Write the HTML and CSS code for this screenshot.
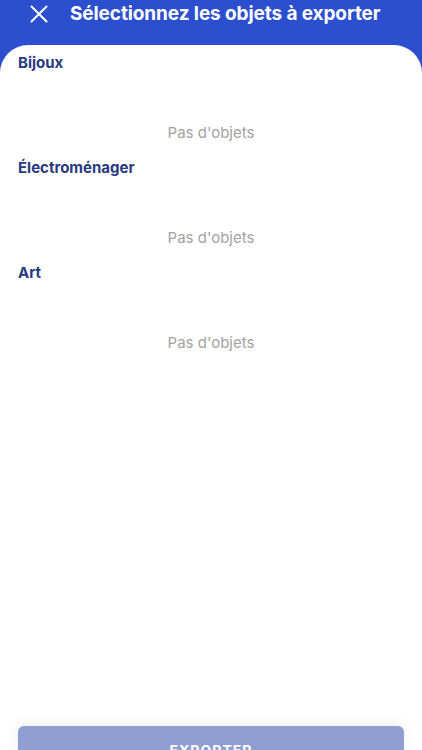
FILE: index.html
```html
<!DOCTYPE html>
<html lang="fr">
<head>
    <meta charset="UTF-8">
    <meta name="viewport" content="width=device-width, initial-scale=1.0">
    <title>Exporter</title>
    <link rel="stylesheet" href="styles.css">
</head>
<body>
    <div class="app">
        <div class="header">
            <button class="close-btn" aria-label="Fermer">
                <svg width="18" height="18" viewBox="0 0 18 18">
                    <path d="M1.5 1.5 L16.5 16.5 M16.5 1.5 L1.5 16.5" stroke="#fff" stroke-width="2" stroke-linecap="round" fill="none"/>
                </svg>
            </button>
            <h1 class="title">Sélectionnez les objets à exporter</h1>
        </div>
        <div class="sheet">
            <div class="list">
                <div class="section">
                    <h2 class="section-title">Bijoux</h2>
                    <p class="empty">Pas d'objets</p>
                </div>
                <div class="section">
                    <h2 class="section-title">Électroménager</h2>
                    <p class="empty">Pas d'objets</p>
                </div>
                <div class="section">
                    <h2 class="section-title">Art</h2>
                    <p class="empty">Pas d'objets</p>
                </div>
            </div>
            <div class="footer">
                <button class="export-btn" disabled>EXPORTER</button>
            </div>
        </div>
    </div>
</body>
</html>
```

FILE: styles.css
```css
body {
    margin: 0;
    padding: 0;
    background-color: #2b4fcf; /* header blue */
    font-family: Inter, "Noto Sans", sans-serif;
    overflow: hidden;
}
.app {
    height: 100vh;
    display: flex;
    flex-direction: column;
}
.header {
    height: 45px;
    flex-shrink: 0;
    display: flex;
    align-items: flex-start;
    padding: 0 0 0 30px;
    box-sizing: border-box;
}
.close-btn {
    background: none;
    border: none;
    padding: 0;
    width: 18px;
    height: 28px;
    display: flex;
    align-items: center;
    cursor: pointer;
}
.title {
    margin: 0 0 0 22px;
    color: #fff;
    font-size: 19px;
    font-weight: 700;
    line-height: 28px;
    letter-spacing: -0.1px;
}
.sheet {
    flex: 1;
    min-height: 0;
    background: #fff;
    border-radius: 28px 28px 0 0;
    display: flex;
    flex-direction: column;
}
.list {
    flex: 1;
    padding-top: 9px;
}
.section {
    padding-bottom: 17px;
}
.section-title {
    margin: 0;
    padding-left: 18px;
    color: #283a80; /* navy */
    font-size: 15px;
    font-weight: 700;
    line-height: 18px;
}
.empty {
    margin: 52px 0 0;
    text-align: center;
    color: #a3a3a3;
    font-size: 15px;
    line-height: 18px;
}
.footer {
    padding: 0 18px;
}
.export-btn {
    display: block;
    width: 100%;
    height: 48px;
    margin-bottom: -24px;
    border: none;
    border-radius: 6px;
    background: #8f9ed2;
    color: #fff;
    font-family: inherit;
    font-size: 14px;
    font-weight: 700;
    letter-spacing: 1px;
    box-shadow: 0 -2px 14px rgba(0, 0, 0, 0.07);
}
```
